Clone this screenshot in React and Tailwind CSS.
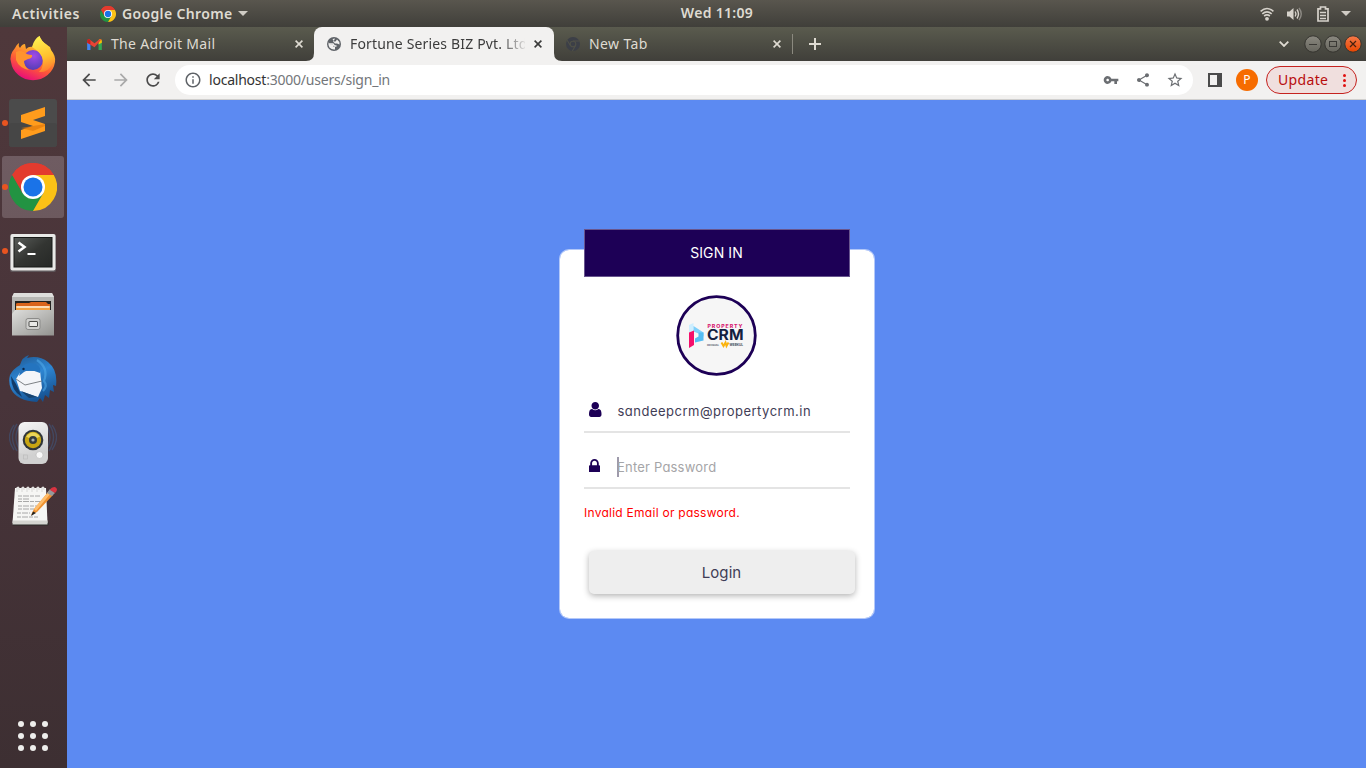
import React from "react";
import {
  MdArrowBack,
  MdArrowForward,
  MdRefresh,
  MdInfoOutline,
  MdVpnKey,
  MdShare,
  MdStarBorder,
} from "react-icons/md";

function ChromeLogo({ className }) {
  return (
    <svg viewBox="0 0 48 48" className={className}>
      <path d="M24 24 L3.2 12 A24 24 0 0 1 44.8 12 Z" fill="#e33b2e" />
      <path d="M3.2 12 A24 24 0 0 0 24 48 L34.4 30 L24 24 L13.6 30 Z" fill="#229342" />
      <path d="M44.8 12 A24 24 0 0 1 24 48 L34.4 30 L24 12 Z" fill="#fbc116" />
      <path d="M3.2 12 A24 24 0 0 1 44.8 12 L24 12 L13.6 30 Z" fill="#e33b2e" />
      <circle cx="24" cy="24" r="12" fill="#fff" />
      <circle cx="24" cy="24" r="9.5" fill="#1a73e8" />
    </svg>
  );
}

function TopBar() {
  return (
    <header className="grid h-[27px] grid-cols-[1fr_auto_1fr] items-center bg-linear-to-b from-[#59564e] to-[#403f3a] font-['Noto_Sans',sans-serif] text-[14px] leading-[25px] font-semibold text-[#dfdbd2]">
      <div className="flex items-center pl-3">
        <span className="w-[88px] tracking-[0.55px] whitespace-nowrap">Activities</span>
        <ChromeLogo className="h-4 w-4" />
        <span className="ml-[6px] w-[114px] tracking-[0.35px] whitespace-nowrap">Google Chrome</span>
        <svg viewBox="0 0 12 6" className="ml-[2px] h-[5px] w-[10px]">
          <path d="M0 0h12L6 6z" fill="#d0ccc5" />
        </svg>
      </div>
      <span className="flex w-[74px] translate-x-[34px] justify-center pb-[2px] tracking-[0.3px] whitespace-nowrap">Wed 11:09</span>
      <div className="flex items-center justify-end pr-[15px]">
        <svg viewBox="0 0 14 14" className="h-[14px] w-[14px]" fill="none" stroke="#d6d2cb" strokeWidth="1.6">
          <path d="M0.6 4.4Q7-1.4 13.4 4.4" />
          <path d="M2.3 6.8Q7 2.8 11.7 6.8" />
          <path d="M4.1 9Q7 6.8 9.9 9" />
          <circle cx="7" cy="11.8" r="1.9" fill="#d6d2cb" stroke="none" />
        </svg>
        <svg viewBox="0 0 16 14" className="ml-[13px] h-[14px] w-4" fill="none" strokeWidth="1.4">
          <path d="M0 4.5h2.5L6.5 1v12l-4-3.5H0z" fill="#d6d2cb" />
          <path d="M8.2 4.5q1.5 2.5 0 5" stroke="#d6d2cb" />
          <path d="M10 2.5q3 4.500 0 9" stroke="#d6d2cb" />
          <path d="M12 1q4.500 6 0 12" stroke="#8d8a84" />
        </svg>
        <svg viewBox="0 0 12 16" className="ml-[14px] h-4 w-3" fill="none" stroke="#d6d2cb">
          <path d="M1 2.800H3.500V1H8.500V2.800H11V15H1z" strokeWidth="1.700" />
          <path d="M3 6.500h6M3 9.500h6M3 12.500h6" strokeWidth="1.600" />
        </svg>
        <svg viewBox="0 0 12 6" className="ml-[12px] h-[5px] w-[10px]">
          <path d="M0 0h12L6 6z" fill="#d0ccc5" />
        </svg>
      </div>
    </header>
  );
}

function FirefoxIcon() {
  return (
    <svg viewBox="0 0 48 48" className="h-12 w-12">
      <defs>
        <linearGradient id="ffBody" x1="0.75" y1="0" x2="0.3" y2="1">
          <stop offset="0" stopColor="#fff04a" />
          <stop offset="0.35" stopColor="#ffa62c" />
          <stop offset="0.65" stopColor="#ff5a36" />
          <stop offset="1" stopColor="#e6077f" />
        </linearGradient>
        <radialGradient id="ffGlobe" cx="0.55" cy="0.3" r="0.8">
          <stop offset="0" stopColor="#a04be8" />
          <stop offset="1" stopColor="#4a3bb0" />
        </radialGradient>
        <linearGradient id="ffTail" x1="0.4" y1="0" x2="0.6" y2="1">
          <stop offset="0" stopColor="#fff250" />
          <stop offset="0.6" stopColor="#ffc02e" />
          <stop offset="1" stopColor="#ff7b30" />
        </linearGradient>
      </defs>
      <path
        d="M6 13Q7 10 10 8Q9 11 11 13Q13 9 16 9L17 14Q20 11 24 12Q26 4 30.500 1Q32 6 38 10L41 12L42 15Q47 21 46 27A22.200 21 0 0 1 2 27Q0 20 6 13Z"
        fill="url(#ffBody)"
      />
      <circle cx="24" cy="25" r="10" fill="url(#ffGlobe)" />
      <path d="M23 12Q25 4 30.500 1Q32 6 38 10Q48 21 43 30Q38 38 30 37Q36 31 33 22Q30 16 23 12Z" fill="url(#ffTail)" />
      <path d="M7 17Q11 15 15 17Q18 20 23 20Q24 23 19 24L15 26Q15 31 20 35Q10 33 7 25Z" fill="#ff932f" />
    </svg>
  );
}

function SublimeIcon() {
  return (
    <svg viewBox="0 0 48 48" className="h-12 w-12">
      <rect width="48" height="48" rx="3" fill="#4b4b4b" />
      <rect y="24" width="48" height="24" rx="3" fill="#464646" />
      <path d="M12 16L36 8V17L24 21L36 25V32L12 40V31L24 27L12 23Z" fill="#ff9c1c" />
      <path d="M24 27L36 25V27L24 32L12 29Z" fill="#e17b0b" opacity="0.7" />
    </svg>
  );
}

function TerminalIcon() {
  return (
    <svg viewBox="0 0 48 48" className="h-12 w-12 translate-y-[1.500px]">
      <defs>
        <linearGradient id="screen" x1="0" y1="0" x2="1" y2="1">
          <stop offset="0" stopColor="#585b58" />
          <stop offset="0.5" stopColor="#333532" />
          <stop offset="1" stopColor="#262826" />
        </linearGradient>
      </defs>
      <rect x="1" y="5.500" width="46" height="38" rx="2" fill="#5e565a" />
      <rect x="1.500" y="5.500" width="45" height="36.500" rx="2" fill="#e9e9e7" />
      <rect x="4.500" y="8.500" width="39" height="30.500" fill="#171917" />
      <rect x="5.500" y="9.500" width="37" height="28.500" fill="url(#screen)" />
      <path d="M9.500 14L15.500 18.500L9.500 23" fill="none" stroke="#fff" strokeWidth="2.600" />
      <path d="M18.500 25.500h8" stroke="#fff" strokeWidth="2.200" />
    </svg>
  );
}

function FilesIcon() {
  return (
    <svg viewBox="0 0 48 48" className="h-12 w-12">
      <defs>
        <linearGradient id="drawer" x1="0" y1="0" x2="1" y2="1">
          <stop offset="0" stopColor="#dededc" />
          <stop offset="1" stopColor="#92928f" />
        </linearGradient>
      </defs>
      <path d="M5 2H43L45 6V42H3V6Z" fill="#b7b7b4" />
      <path d="M5 2H43L45 6H3Z" fill="#dededc" />
      <rect x="6" y="10" width="36" height="10" fill="#232321" />
      <path d="M7 13Q7 12 9 12H20L22 11H37L39 13H41V20H7Z" fill="#d9641c" />
      <path d="M7 15H41V20H7Z" fill="#f3a144" />
      <path d="M7.500 16H40.500" stroke="#fff1dc" strokeWidth="1.400" />
      <path d="M6 19H42L45 23V44.500H3V23Z" fill="url(#drawer)" />
      <rect x="17" y="27.500" width="14" height="11" rx="2" fill="#cfcfcd" stroke="#8b8b89" />
      <rect x="20" y="30.500" width="8.500" height="5" rx="0.500" fill="#e9e9e7" stroke="#4c4c4a" />
    </svg>
  );
}

function ThunderbirdIcon() {
  return (
    <svg viewBox="0 0 48 48" className="h-12 w-12">
      <defs>
        <linearGradient id="bird" x1="0.200" y1="0" x2="0.600" y2="1">
          <stop offset="0" stopColor="#1f5a95" />
          <stop offset="0.450" stopColor="#2e86d3" />
          <stop offset="1" stopColor="#15508f" />
        </linearGradient>
      </defs>
      <path
        d="M1 20Q4 14 11 10Q13 2 20 0L18 3Q30 0 39 7Q49 15 47 31L44 30L45 37L41 35L40 43L36 40L34 47L31 43L28 47Q8 46 2 34Q-1 27 1 20Z"
        fill="url(#bird)"
      />
      <path d="M2 21Q2 36 13 42L7 29Z" fill="#133b68" />
      <path d="M7 24L12 16L31 16L33 33L29 42L11 36Z" fill="#f3f5f9" />
      <path d="M7 24L16 30L33 26" fill="none" stroke="#6f7478" strokeWidth="0.900" />
      <path d="M12 36L28 42L20 43Z" fill="#18436f" />
      <path d="M11 17Q12 9 21 8Q33 9 31 18Q20 13 15 17L10 21Z" fill="#2474bf" />
      <path d="M28 5Q40 13 35 26Q39 31 34 36" fill="none" stroke="#4fa8e8" strokeWidth="2.200" opacity="0.600" />
      <circle cx="14.500" cy="14" r="1.200" fill="#0c2748" />
    </svg>
  );
}

function RhythmboxIcon() {
  return (
    <svg viewBox="0 0 48 48" className="h-12 w-12">
      <defs>
        <linearGradient id="speaker" x1="0" y1="0" x2="0.300" y2="1">
          <stop offset="0" stopColor="#f6f6f6" />
          <stop offset="1" stopColor="#cbcbcb" />
        </linearGradient>
      </defs>
      <g fill="none" stroke="#3f608f" strokeWidth="1.400">
        <path d="M5 6Q-4 18 5 31M8 5Q-1 18 8 32M11 6Q3 18 11 31" opacity="0.450" />
        <path d="M43 6Q52 18 43 31M40 5Q49 18 40 32M37 6Q45 18 37 31" opacity="0.450" />
      </g>
      <rect x="9.500" y="3" width="29.500" height="42" rx="6" fill="url(#speaker)" />
      <path d="M10 34Q24 38 38.500 34V39Q38 44 32 44.500H16Q10 44 10 39Z" fill="#d1d1d1" />
      <circle cx="24" cy="21" r="10.300" fill="#30363a" />
      <circle cx="24" cy="21" r="8.200" fill="#c7a512" />
      <path d="M17 17.500Q24 9.500 31 17.500L24 21Z" fill="#ebd558" />
      <circle cx="24" cy="21" r="4" fill="#353b3c" />
      <circle cx="24" cy="21" r="1.600" fill="#a8b0ae" />
      <circle cx="30.500" cy="36" r="3.500" fill="#f8f8f8" stroke="#b9b9b9" strokeWidth="0.600" />
      <rect x="14.500" y="36" width="4" height="4" fill="none" stroke="#bcbcbc" strokeWidth="0.700" />
    </svg>
  );
}

function NotesIcon() {
  return (
    <svg viewBox="0 0 48 48" className="h-12 w-12 overflow-visible">
      <rect x="3.500" y="38.500" width="36" height="4" rx="1" fill="#282826" />
      <path d="M6 5H37L38.500 40H3.500Z" fill="#f6f6f4" />
      <path d="M3.700 37.500H38.500V41.500H3.500Z" fill="#d4d4d0" />
      <g fill="none" stroke="#e2e2e0" strokeWidth="1.500">
        <path d="M8 9V5Q10 3 10 7M13 9V5Q15 3 15 7M18 9V5Q20 3 20 7M23 9V5Q25 3 25 7M28 9V5Q30 3 30 7M33 9V5Q35 3 35 7" />
      </g>
      <g fill="none" stroke="#969694" strokeWidth="0.800" strokeDasharray="4 1 6 1">
        <path d="M9 13H31M9 16H21M9 18.500H33M9 23H33M9 26H27M8 30H21M8 34H29" />
      </g>
      <path d="M22 32L25 26L40 8L44 12L28 29Z" fill="#ef9130" />
      <path d="M25 26L40 8L42 10L27 28Z" fill="#ffbe6c" />
      <path d="M38 10L41 6L46 10L43 13Z" fill="#95999c" />
      <path d="M41 7Q42 4 46 4Q50 6 46 10Z" fill="#d93341" />
      <path d="M22 33L24 28.500L27 30Z" fill="#232321" />
    </svg>
  );
}

function DockItem({ running, active, children }) {
  return (
    <div
      className={
        "flex h-[62px] w-[62px] items-center rounded-[3px] " + (active ? "bg-linear-to-b from-[#6f5c62] to-[#6c595e]" : "")
      }
    >
      <span className={"h-[6px] w-[6px] shrink-0 rounded-full " + (running ? "bg-[#e95420]" : "")} />
      <span className="ml-px shrink-0">{children}</span>
    </div>
  );
}

function Dock() {
  return (
    <aside className="flex w-[67px] shrink-0 flex-col justify-between bg-linear-to-b from-[#4f383b] via-[#48343a] to-[#3d2f32]">
      <div className="flex flex-col gap-[2px] pt-px pl-[2px]">
        <DockItem><FirefoxIcon /></DockItem>
        <DockItem running><SublimeIcon /></DockItem>
        <DockItem running active><ChromeLogo className="h-12 w-12" /></DockItem>
        <DockItem running><TerminalIcon /></DockItem>
        <DockItem><FilesIcon /></DockItem>
        <DockItem><ThunderbirdIcon /></DockItem>
        <DockItem><RhythmboxIcon /></DockItem>
        <DockItem><NotesIcon /></DockItem>
      </div>
      <div className="mb-[17px] ml-[18px] grid w-[30px] grid-cols-3 gap-[6px]">
        {[0, 1, 2, 3, 4, 5, 6, 7, 8].map((n) => (
          <span key={n} className="h-[6px] w-[6px] rounded-full bg-[#eeeeec]" />
        ))}
      </div>
    </aside>
  );
}

function Cross({ color }) {
  return (
    <svg viewBox="0 0 8 8" className="h-2 w-2 shrink-0">
      <path d="M0.600 0.600L7.400 7.400M7.400 0.600L0.600 7.400" stroke={color} strokeWidth="1.600" />
    </svg>
  );
}

function TabStrip() {
  return (
    <div className="flex h-[34px] items-center bg-linear-to-b from-[#5a5b4e] to-[#403f3a] font-['Noto_Sans',sans-serif] text-[14px] text-[#dfdbd2]">
      <div className="flex w-[247px] items-center pl-5">
        <svg viewBox="0 0 16 12" className="h-[11px] w-[15px]">
          <path d="M0 2V12H3.600V5Z" fill="#4285f4" />
          <path d="M16 2V12H12.400V5Z" fill="#34a853" />
          <path d="M12.400 1L14 0Q16 0 16 2V4L12.400 6Z" fill="#fbbc04" />
          <path d="M0 3Q0 0 2 0L8 4.500L14 0Q15 0 15 1L8 9L0 4Z" fill="#ea4335" />
          <path d="M0 2Q0 0 2 0L3.600 1.300V6L0 4Z" fill="#c5221f" />
        </svg>
        <span className="ml-[9px] w-[184px] pb-[2px] tracking-[0.320px] whitespace-nowrap">The Adroit Mail</span>
        <Cross color="#dfdbd2" />
      </div>
      <div className="relative flex h-[34px] w-[240px] items-center rounded-t-[8px] bg-[#f2f1f0] pl-[13px] text-[#3c3c3c]">
        <svg viewBox="0 0 8 8" className="absolute bottom-0 -left-2 h-2 w-2">
          <path d="M8 0V8H0Q8 8 8 0" fill="#f2f1f0" />
        </svg>
        <svg viewBox="0 0 8 8" className="absolute -right-2 bottom-0 h-2 w-2">
          <path d="M0 0V8H8Q0 8 0 0" fill="#f2f1f0" />
        </svg>
        <svg viewBox="0 0 14 14" className="h-[14px] w-[14px]">
          <circle cx="7" cy="7" r="7" fill="#5f6368" />
          <path d="M1.500 5Q2 8 4.500 7.500L6.500 8V10H8V12.500Q5 13 2.500 10.500Q1 8 1.500 5ZM5.500 2L8 1.500L7 3.500L6 4.500L8 6.500H10L12.500 7.500Q12.500 4 10 2.500L8.500 4.500H7Z" fill="#f2f1f0" />
          <path d="M2 7H6L7.500 9H9.500" fill="none" stroke="#f2f1f0" strokeWidth="1.300" />
        </svg>
        <span className="ml-[9px] w-[175px] overflow-hidden pb-[2px] tracking-[0.160px] whitespace-nowrap [mask-image:linear-gradient(to_right,#000_150px,transparent_178px)]">
          Fortune Series BIZ Pvt. Ltd
        </span>
        <span className="ml-[9px] flex"><Cross color="#3a3a3a" /></span>
      </div>
      <div className="flex w-[238px] items-center pl-3">
        <svg viewBox="0 0 14 14" className="h-[14px] w-[14px]">
          <circle cx="7" cy="7" r="7" fill="#3c3f47" />
          <circle cx="7" cy="7" r="2.800" fill="#3c3f47" stroke="#505148" strokeWidth="1.100" />
          <path d="M7 4H13.500M4.400 8.500L1.200 3.200M9.500 8.500L6.400 14" stroke="#505148" strokeWidth="1.100" />
        </svg>
        <span className="ml-[9px] w-[184px] pb-[2px] tracking-[0.400px] whitespace-nowrap">New Tab</span>
        <Cross color="#dfdbd2" />
      </div>
      <div className="h-5 w-px bg-[#8b897f]" />
      <svg viewBox="0 0 12 12" className="ml-4 h-3 w-3">
        <path d="M6 0V12M0 6H12" stroke="#dfdbd2" strokeWidth="2" />
      </svg>
      <div className="ml-auto flex items-center pr-[5px]">
        <svg viewBox="0 0 10 6" className="mr-[15px] h-[6px] w-[10px]">
          <path d="M0.700 0.700L5 5L9.300 0.700" fill="none" stroke="#dfdbd2" strokeWidth="1.800" />
        </svg>
        <svg viewBox="0 0 57 18" className="h-[18px] w-[57px] overflow-visible">
          <defs>
            <linearGradient id="winBtn" x1="0" y1="0" x2="0" y2="1">
              <stop offset="0" stopColor="#8b8980" />
              <stop offset="1" stopColor="#66655d" />
            </linearGradient>
            <linearGradient id="closeBtn" x1="0" y1="0" x2="0" y2="1">
              <stop offset="0" stopColor="#f57a4a" />
              <stop offset="1" stopColor="#e84500" />
            </linearGradient>
          </defs>
          <g stroke="#35342f" strokeWidth="1">
            <circle cx="9" cy="9" r="8.200" fill="url(#winBtn)" />
            <circle cx="29" cy="9" r="8.200" fill="url(#winBtn)" />
            <circle cx="49" cy="9" r="8.200" fill="url(#closeBtn)" />
          </g>
          <path d="M5 9.500H13" stroke="#3a3935" />
          <rect x="25.500" y="6.500" width="7" height="5" fill="none" stroke="#3a3935" />
          <path d="M46 6L52 12M52 6L46 12" stroke="#46200f" strokeWidth="1.200" />
        </svg>
      </div>
    </div>
  );
}

function Toolbar() {
  return (
    <div className="flex h-[39px] items-center border-b border-[#d0cfce] bg-[#f2f1f0] pr-[9px] pl-3 text-[#4b4b4b]">
      <MdArrowBack size={20} />
      <MdArrowForward size={20} className="ml-3 text-[#a9a9a9]" />
      <MdRefresh size={20} className="ml-3" />
      <div className="ml-3 flex h-[30px] flex-1 items-center rounded-full bg-white pr-[9px] pl-[9px] text-[#6b6e72]">
        <MdInfoOutline size={18} className="text-[#5f6368]" />
        <span className="ml-[7px] pb-[2px] font-['Noto_Sans',sans-serif] text-[14px] tracking-[-0.220px] whitespace-nowrap text-[#73767a]">
          <span className="text-[#333]">localhost</span>:3000/users/sign_in
        </span>
        <MdVpnKey size={16} className="ml-auto" />
        <MdShare size={16} className="ml-4" />
        <MdStarBorder size={18} className="ml-[15px]" />
      </div>
      <svg viewBox="0 0 14 14" className="ml-[15px] h-[14px] w-[14px]">
        <path d="M0 0H14V14H0ZM2 2V12H9V2Z" fill="#4b4b4b" fillRule="evenodd" />
      </svg>
      <span className="ml-[14px] flex h-[22px] w-[22px] items-center justify-center rounded-full bg-[#f66c00] font-['Noto_Sans',sans-serif] text-[12px] text-white">
        P
      </span>
      <div className="ml-2 flex h-7 w-[91px] items-center rounded-full border border-[#c5221f] bg-[#f0dfde] pl-[11px] font-['Noto_Sans',sans-serif] text-[14px] text-[#b80d0d]">
        <span className="w-[65px] pb-[2px] tracking-[0.350px] whitespace-nowrap">Update</span>
        <span className="flex flex-col gap-[2px]">
          <i className="h-[3px] w-[3px] rounded-full bg-[#e01010]" />
          <i className="h-[3px] w-[3px] rounded-full bg-[#e01010]" />
          <i className="h-[3px] w-[3px] rounded-full bg-[#e01010]" />
        </span>
      </div>
    </div>
  );
}

function BrandBadge() {
  return (
    <svg viewBox="0 0 82 82" className="h-[82px] w-[82px] -translate-x-[0.500px] -translate-y-[0.500px]">
      <circle cx="41" cy="41" r="38.800" fill="#f6f6f6" stroke="#1d0056" strokeWidth="2.800" />
      <path d="M13.500 30.500L18 28.500V36L13.500 38Z" fill="#cdeeff" />
      <path d="M18 31.500L28 38V42L23 39L18 37Z" fill="#7ed0fb" />
      <path d="M28 38V46L19.500 48V44L23 42V38Z" fill="#55bdf3" />
      <path d="M13.500 38L18.500 36V50.500L13.500 53.500Z" fill="#f4106b" />
      <text x="32" y="33" textLength="36" lengthAdjust="spacingAndGlyphs" fontFamily="Inter, sans-serif" fontSize="4.400" fontWeight="800" letterSpacing="0.800" fill="#d81b72">PROPERTY</text>
      <text x="31.500" y="45.700" textLength="36.500" lengthAdjust="spacingAndGlyphs" fontFamily="Inter, sans-serif" fontSize="14" fontWeight="700" fill="#14213f">CRM</text>
      <text x="31.500" y="51" textLength="12" lengthAdjust="spacingAndGlyphs" fontFamily="Inter, sans-serif" fontSize="2.500" fontWeight="700" fill="#444a58">OFFICIAL</text>
      <path d="M46 48L48 51.500L50 48L51 51.500L53 48" fill="none" stroke="#fbb30c" strokeWidth="1.900" />
      <text x="54" y="51.500" textLength="13.500" lengthAdjust="spacingAndGlyphs" fontFamily="Inter, sans-serif" fontSize="3.800" fontWeight="700" fill="#444a58">WEBKUL</text>
    </svg>
  );
}

function SignInCard() {
  return (
    <form className="mt-[149px] ml-[492px] flex h-[370px] w-[316px] flex-col rounded-[10px] border border-[#ffffff88] bg-white bg-clip-padding px-6 font-[Inter,sans-serif] text-[#3f3d56] [font-feature-settings:'cv11']">
      <div className="-mt-[21px] flex h-[48px] w-[266px] shrink-0 items-center justify-center border border-[#ffffff55] bg-[#1d0056] pr-px pb-px text-[14px] tracking-[0.100px] text-white">
        <span className="-translate-y-[0.500px]">SIGN IN</span>
      </div>
      <div className="mt-[18px] flex justify-center pr-px"><BrandBadge /></div>
      <div className="mt-[13px] flex h-[43px] w-[266px] shrink-0 items-center border-b-2 border-[#e4e4e4]">
        <svg viewBox="0 128 1280 1536" className="mb-[2px] ml-[5px] h-[15px] w-[12.500px]" fill="#1d0056">
          <path d="M1280 1399q0 109-62.500 187t-150.500 78H213q-88 0-150.500-78T0 1399q0-85 8.500-160.500t31.500-152 58.500-131 94-89T327 832q131 128 313 128t313-128q76 0 134.500 34.500t94 89 58.500 131 31.500 152 8.500 160.500zm-256-887q0 159-112.500 271.500T640 896 368.500 783.500 256 512t112.500-271.500T640 128t271.500 112.500T1024 512z" />
        </svg>
        <span className="ml-4 translate-y-px text-[13px] tracking-[0.500px] whitespace-nowrap">sandeepcrm@propertycrm.in</span>
      </div>
      <div className="mt-[13px] flex h-[43px] w-[266px] shrink-0 items-center border-b-2 border-[#e4e4e4]">
        <svg viewBox="0 128 1152 1408" className="mb-[2px] ml-[5px] h-[13.500px] w-[11px]" fill="#1d0056">
          <path d="M320 768h512V576q0-106-75-181t-181-75-181 75-75 181v192zm832 96v576q0 40-28 68t-68 28H96q-40 0-68-28t-28-68V864q0-40 28-68t68-28h32V576q0-184 132-316t316-132 316 132 132 316v192h32q40 0 68 28t28 68z" />
        </svg>
        <span className="ml-[17px] h-5 w-[2px] bg-[#9e9aab]" />
        <span className="-ml-[2px] translate-y-px text-[13px] tracking-[0.200px] whitespace-nowrap text-[#a5a5a7]">Enter Password</span>
      </div>
      <p className="mt-[14px] h-5 text-[12px] leading-5 tracking-[0.260px] whitespace-nowrap text-[#ff0000]">Invalid Email or password.</p>
      <div className="mt-[28px] ml-[5px] flex h-[43px] w-[266px] shrink-0 items-center justify-center rounded-[5px] bg-[#eeeeee] pt-px pr-px text-[15px] tracking-[0.100px] shadow-[0_2px_6px_rgba(0,0,0,0.300)]">
        Login
      </div>
    </form>
  );
}

export default function App() {
  return (
    <div className="flex h-[768px] w-[1366px] flex-col overflow-hidden">
      <TopBar />
      <div className="flex min-h-0 flex-1">
        <Dock />
        <main className="flex flex-1 flex-col">
          <TabStrip />
          <Toolbar />
          <section className="flex-1 bg-[#5c8af2]">
            <div className="flow-root"><SignInCard /></div>
          </section>
        </main>
      </div>
    </div>
  );
}
